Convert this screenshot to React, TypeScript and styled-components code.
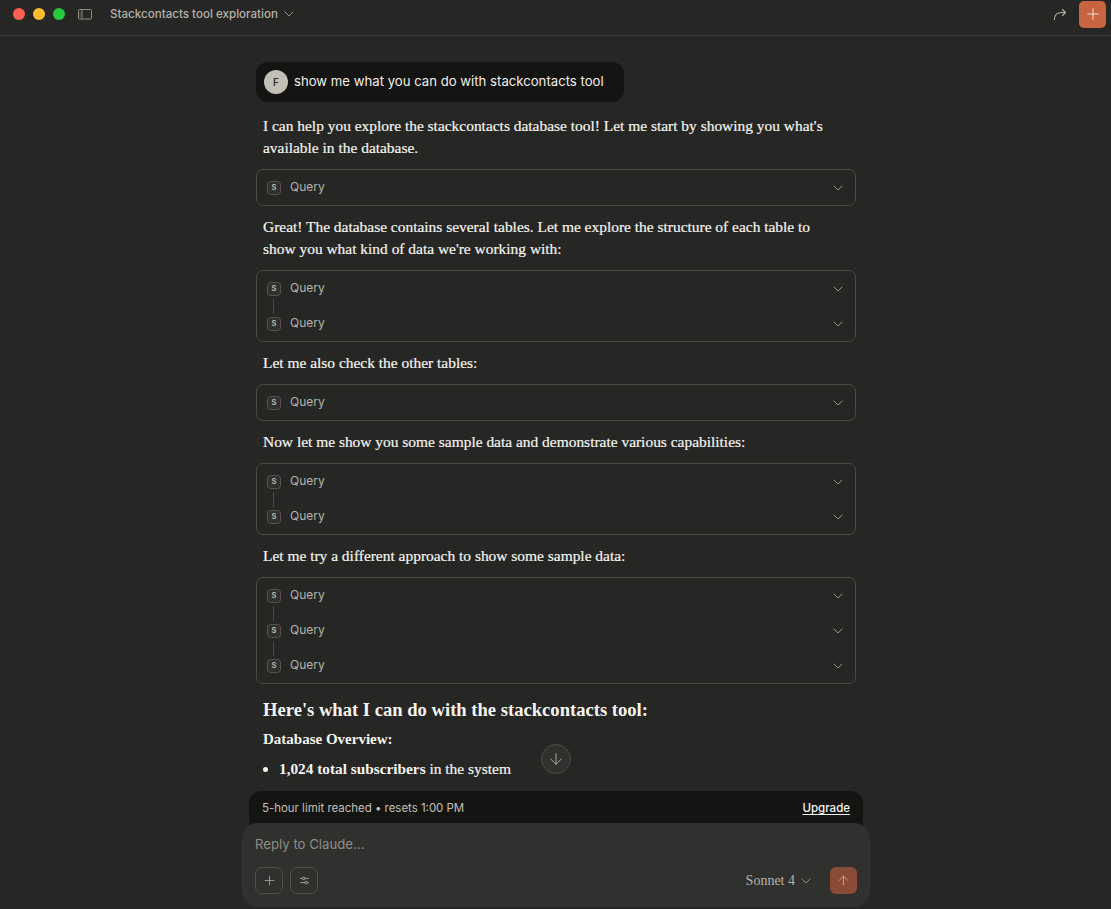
import React from "react";
import styled, { createGlobalStyle } from "styled-components";
import { ChevronDown, ArrowDown, ArrowUp, Plus } from "lucide-react";

const Global = createGlobalStyle`
  html, body { margin: 0; padding: 0; background: #262624; }
  body { font-family: "Inter", "Liberation Sans", sans-serif; color: #f5f4ef; }
`;
const sans = `"Inter", "Liberation Sans", sans-serif`;
const serif = `"Liberation Serif", "Times New Roman", serif`;

const Page = styled.div`
  position: relative;
  width: 1111px;
  height: 909px;
  overflow: hidden;
  background: #262624;
  display: flex;
  flex-direction: column;
`;
const TopBar = styled.header`
  flex: none;
  height: 28px;
  border-bottom: 1px solid #3c3c3a;
  display: flex;
  align-items: center;
  padding: 0 5px 7px 13px;
`;
const Lights = styled.div`
  display: flex;
  gap: 8px;
`;
const Light = styled.span<{ $c: string }>`
  width: 12px;
  height: 12px;
  border-radius: 50%;
  background: ${(p) => p.$c};
`;
const SideIcon = styled.svg`
  margin-left: 13px;
  width: 14px;
  height: 11px;
`;
const Title = styled.div`
  margin-left: 18px;
  font: 500 11.6px ${sans};
  color: #b5b3aa;
  display: flex;
  align-items: center;
  gap: 3px;
`;
const Spacer = styled.div`
  flex: 1;
`;
const ShareIcon = styled.svg`
  width: 14px;
  height: 14px;
  margin-right: 12px;
`;
const NewBtn = styled.button`
  width: 27px;
  height: 27px;
  border: 0;
  padding: 0;
  border-radius: 5px;
  background: #c96442;
  color: #f7e9e2;
  display: grid;
  place-items: center;
`;
const Column = styled.main`
  width: 600px;
  margin-left: 256px;
  padding-top: 26px;
  display: flex;
  flex-direction: column;
`;
const Bubble = styled.div`
  width: 368px;
  height: 40px;
  box-sizing: border-box;
  background: #141413;
  border-radius: 12px;
  display: flex;
  align-items: center;
  padding: 0 0 0 8px;
  gap: 6px;
  font: 400 13.17px ${sans};
  color: #f0efe9;
  margin-bottom: 13px;
`;
const BubbleText = styled.span`
  margin-bottom: 2px;
`;
const Avatar = styled.span`
  width: 24px;
  height: 24px;
  border-radius: 50%;
  background: #c2c0b6;
  color: #30302e;
  font: 600 10px ${sans};
  display: grid;
  place-items: center;
`;
const Para = styled.p`
  margin: 0 0 10px;
  padding: 0 30px 0 7px;
  font: 400 15.45px/22px ${serif};
  -webkit-text-stroke: 0.2px #f5f4ef;
  color: #f5f4ef;
`;
const ToolBox = styled.div`
  border: 1px solid #4a4a47;
  border-radius: 7px;
  margin-bottom: 10px;
`;
const ToolRow = styled.div`
  position: relative;
  height: 35px;
  display: flex;
  align-items: center;
  padding: 0 9px 0 10px;
  box-sizing: border-box;
`;
const Badge = styled.span`
  width: 14px;
  height: 14px;
  box-sizing: border-box;
  border: 1px solid #55554f;
  background: #30302e;
  border-radius: 3.5px;
  color: #c2c0b6;
  font: 600 7.5px ${sans};
  display: grid;
  place-items: center;
`;
const Connector = styled.span`
  position: absolute;
  left: 16px;
  top: -7px;
  width: 1px;
  height: 15px;
  background: #4a4a47;
`;
const RowLabel = styled.span`
  margin: 0 0 2px 9px;
  flex: 1;
  font: 400 12px ${sans};
  color: #b5b3aa;
`;
const Heading = styled.h2`
  margin: 3px 0 5px;
  padding-left: 7px;
  font: 700 18.6px/26px ${serif};
  color: #f5f4ef;
`;
const SubHead = styled.p`
  margin: 0 0 8px;
  padding-left: 7px;
  font: 700 15px/22px ${serif};
  color: #f5f4ef;
`;
const List = styled.ul`
  margin: 0;
  padding-left: 23px;
  font: 400 15.45px/22px ${serif};
  -webkit-text-stroke: 0.2px #f5f4ef;
  color: #f5f4ef;
`;
const Strong = styled.strong`
  font-size: 15.3px;
  -webkit-text-stroke: 0;
`;
const ScrollDown = styled.button`
  position: absolute;
  left: 541px;
  top: 744px;
  width: 30px;
  height: 30px;
  box-sizing: border-box;
  border-radius: 50%;
  border: 1px solid #4e4e4b;
  background: #30302e;
  color: #c2c0b6;
  padding: 0;
  display: grid;
  place-items: center;
`;
const Dock = styled.div`
  position: absolute;
  left: 242px;
  top: 791px;
  width: 628px;
`;
const Limit = styled.div`
  margin: 0 7px;
  height: 40px;
  box-sizing: border-box;
  background: #141413;
  border-radius: 12px 12px 0 0;
  padding: 0 13px 6px 13px;
  display: flex;
  align-items: center;
  justify-content: space-between;
  font: 400 11.45px ${sans};
  color: #c2c0b6;
`;
const Upgrade = styled.a`
  font: 500 11.5px ${sans};
  color: #f5f4ef;
  text-decoration: underline;
  text-underline-offset: 2px;
`;
const Composer = styled.div`
  margin-top: -8px;
  height: 84px;
  box-sizing: border-box;
  background: #30302e;
  border-radius: 16px;
  padding: 13px;
  display: flex;
  flex-direction: column;
  justify-content: space-between;
`;
const Placeholder = styled.div`
  font: 400 13.2px/17px ${sans};
  color: #8f8d85;
`;
const Actions = styled.div`
  display: flex;
  align-items: center;
  gap: 7px;
`;
const IconBtn = styled.button`
  width: 28px;
  height: 27px;
  box-sizing: border-box;
  border: 1px solid #4e4e4b;
  border-radius: 7px;
  background: transparent;
  color: #b5b3aa;
  padding: 0;
  display: grid;
  place-items: center;
`;
const Model = styled.div`
  margin-right: 9px;
  font: 400 14px ${serif};
  color: #b5b3aa;
  display: flex;
  align-items: center;
  gap: 3px;
`;
const Send = styled.button`
  width: 27px;
  height: 27px;
  border: 0;
  padding: 0;
  border-radius: 6px;
  background: #8a4c36;
  color: #c9b5ab;
  display: grid;
  place-items: center;
`;

const Tool = ({ rows }: { rows: number }) => (
  <ToolBox>
    {Array.from({ length: rows }).map((_, i) => (
      <ToolRow key={i}>
        {i > 0 && <Connector />}
        <Badge>S</Badge>
        <RowLabel>Query</RowLabel>
        <ChevronDown size={16} color="#b5b3aa" strokeWidth={1.2} />
      </ToolRow>
    ))}
  </ToolBox>
);

export default function App() {
  return (
    <Page>
      <Global />
      <TopBar>
        <Lights>
          <Light $c="#ff5f57" />
          <Light $c="#febc2e" />
          <Light $c="#28c840" />
        </Lights>
        <SideIcon viewBox="0 0 14 11" fill="none" stroke="#8f8d85">
          <rect x=".5" y=".5" width="13" height="9.5" rx="1" />
          <path d="M4 .5V10" />
          <path d="M2.2 2.5v5.5" opacity=".5" />
        </SideIcon>
        <Title>
          Stackcontacts tool exploration
          <ChevronDown size={16} strokeWidth={1.1} />
        </Title>
        <Spacer />
        <ShareIcon viewBox="0 0 14 14" fill="none" stroke="#b5b3aa" strokeWidth="1.1" strokeLinecap="round" strokeLinejoin="round">
          <path d="M1.5 12.5c0-4 2.5-7 7.5-7h3.5" />
          <path d="M9.5 2.5l3 3-3 3" />
        </ShareIcon>
        <NewBtn>
          <Plus size={18} strokeWidth={1.2} />
        </NewBtn>
      </TopBar>
      <Column>
        <Bubble>
          <Avatar>F</Avatar>
          <BubbleText>show me what you can do with stackcontacts tool</BubbleText>
        </Bubble>
        <Para>
          I can help you explore the stackcontacts database tool! Let me start by showing you what's available in the database.
        </Para>
        <Tool rows={1} />
        <Para>
          Great! The database contains several tables. Let me explore the structure of each table to show you what kind of data we're working with:
        </Para>
        <Tool rows={2} />
        <Para>Let me also check the other tables:</Para>
        <Tool rows={1} />
        <Para>Now let me show you some sample data and demonstrate various capabilities:</Para>
        <Tool rows={2} />
        <Para>Let me try a different approach to show some sample data:</Para>
        <Tool rows={3} />
        <Heading>Here's what I can do with the stackcontacts tool:</Heading>
        <SubHead>Database Overview:</SubHead>
        <List>
          <li>
            <Strong>1,024 total subscribers</Strong> in the system
          </li>
        </List>
      </Column>
      <ScrollDown>
        <ArrowDown size={18} strokeWidth={1.1} />
      </ScrollDown>
      <Dock>
        <Limit>
          <span>5-hour limit reached • resets 1:00 PM</span>
          <Upgrade>Upgrade</Upgrade>
        </Limit>
        <Composer>
          <Placeholder>Reply to Claude...</Placeholder>
          <Actions>
            <IconBtn>
              <Plus size={15} strokeWidth={1.2} />
            </IconBtn>
            <IconBtn>
              <svg width="11" height="11" viewBox="0 0 13 13" fill="none" stroke="currentColor" strokeWidth="1">
                <path d="M1.5 4h2.5M7 4h4.5M1.5 9h5.5M10 9h1.5" />
                <circle cx="5.5" cy="4" r="1.5" />
                <circle cx="8.5" cy="9" r="1.5" />
              </svg>
            </IconBtn>
            <Spacer />
            <Model>
              Sonnet 4
              <ChevronDown size={16} strokeWidth={1.1} />
            </Model>
            <Send>
              <ArrowUp size={15} strokeWidth={1.3} />
            </Send>
          </Actions>
        </Composer>
      </Dock>
    </Page>
  );
}
